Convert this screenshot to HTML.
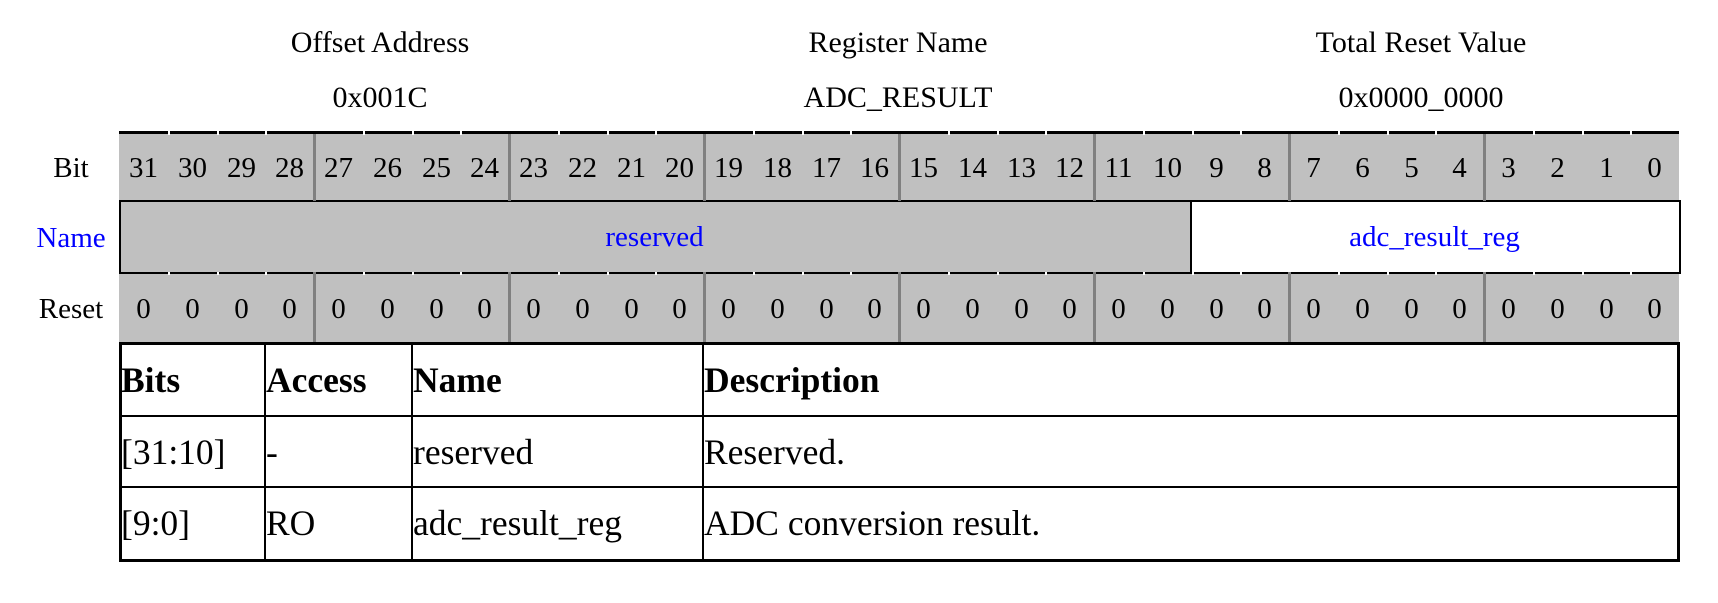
<!DOCTYPE html>
<html><head><meta charset="utf-8"><style>
body{margin:0;width:1718px;height:603px;background:#fff;position:relative;overflow:hidden;font-family:"Liberation Serif",serif;color:#000}
.a{position:absolute}
.hd{position:absolute;font-size:30px;text-align:center;width:400px}
.cell{position:absolute;font-size:29px;text-align:center;width:49px}
.lab{position:absolute;font-size:29px;text-align:center;width:110px;left:16px}
.dt{position:absolute;font-size:35.5px;white-space:nowrap}
</style></head><body>
<div class="hd" style="left:180px;top:26px">Offset Address</div>
<div class="hd" style="left:180px;top:81px">0x001C</div>
<div class="hd" style="left:698px;top:26px">Register Name</div>
<div class="hd" style="left:698px;top:81px">ADC_RESULT</div>
<div class="hd" style="left:1221px;top:26px">Total Reset Value</div>
<div class="hd" style="left:1221px;top:81px">0x0000_0000</div>

<div class="a" style="left:119px;top:131px;width:1560px;height:3px;background:#000"></div>
<div class="a" style="left:119px;top:134px;width:1560px;height:67px;background:#c0c0c0"></div>
<div class="a" style="left:119px;top:272px;width:1560px;height:71px;background:#c0c0c0"></div>
<div class="a" style="left:119px;top:200px;width:1069px;height:70px;background:#c0c0c0;border:2px solid #000"></div>
<div class="a" style="left:1190px;top:200px;width:487px;height:70px;background:#fff;border:2px solid #000"></div>
<div class="a" style="left:119px;top:200px;width:1071px;height:72px;line-height:74px;text-align:center;color:#00f;font-size:29px">reserved</div>
<div class="a" style="left:1190px;top:200px;width:489px;height:72px;line-height:74px;text-align:center;color:#00f;font-size:29px">adc_result_reg</div>

<div class="lab" style="top:152px">Bit</div>
<div class="lab" style="top:222px;color:#00f">Name</div>
<div class="lab" style="top:293px">Reset</div>

<div id="g"></div>
<script>
var h='';
for(var i=0;i<32;i++){var x=Math.round(119+i*48.75);
h+='<div class="cell" style="left:'+x+'px;top:152px">'+(31-i)+'</div>';
h+='<div class="cell" style="left:'+x+'px;top:293px">0</div>';
if(i>0){ if(i%4==0){h+='<div class="a" style="left:'+(x-1)+'px;top:134px;width:3px;height:67px;background:#808080"></div><div class="a" style="left:'+(x-1)+'px;top:272px;width:3px;height:71px;background:#808080"></div>';}
else{h+='<div class="a" style="left:'+x+'px;top:131px;width:2px;height:4px;background:#fff"></div><div class="a" style="left:'+x+'px;top:272px;width:2px;height:3px;background:#fff"></div>';}}
}
document.getElementById('g').innerHTML=h;
</script>

<div class="a" style="left:119px;top:342px;width:1555px;height:214px;border:3px solid #000"></div>
<div class="a" style="left:119px;top:415px;width:1558px;height:2px;background:#000"></div>
<div class="a" style="left:119px;top:486px;width:1558px;height:2px;background:#000"></div>
<div class="a" style="left:264px;top:342px;width:2px;height:217px;background:#000"></div>
<div class="a" style="left:411px;top:342px;width:2px;height:217px;background:#000"></div>
<div class="a" style="left:702px;top:342px;width:2px;height:217px;background:#000"></div>

<div class="dt" style="left:121px;top:359px;font-weight:bold">Bits</div>
<div class="dt" style="left:266px;top:359px;font-weight:bold">Access</div>
<div class="dt" style="left:413px;top:359px;font-weight:bold">Name</div>
<div class="dt" style="left:704px;top:359px;font-weight:bold">Description</div>
<div class="dt" style="left:121px;top:431px">[31:10]</div>
<div class="dt" style="left:266px;top:431px">-</div>
<div class="dt" style="left:413px;top:431px">reserved</div>
<div class="dt" style="left:704px;top:431px">Reserved.</div>
<div class="dt" style="left:121px;top:502px">[9:0]</div>
<div class="dt" style="left:266px;top:502px">RO</div>
<div class="dt" style="left:413px;top:502px">adc_result_reg</div>
<div class="dt" style="left:704px;top:502px">ADC conversion result.</div>
</body></html>
